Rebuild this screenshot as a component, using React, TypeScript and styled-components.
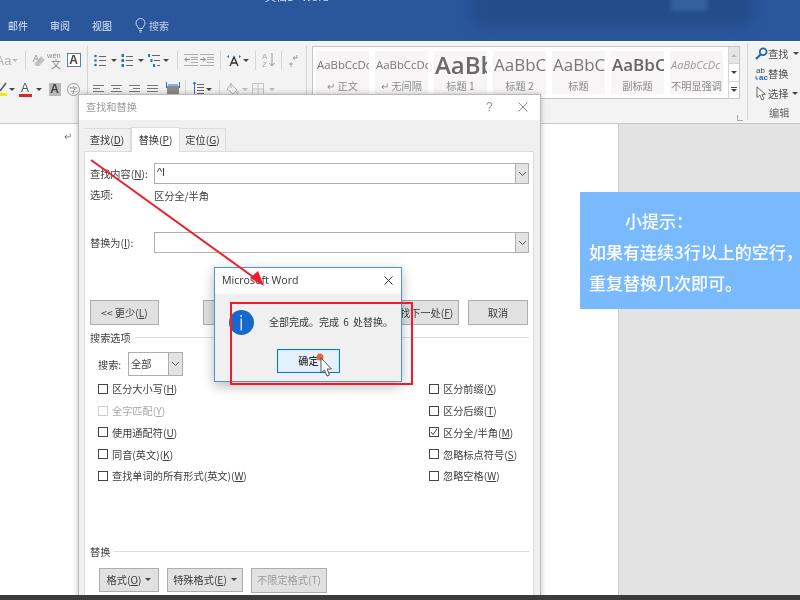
import React from "react";
import styled, { createGlobalStyle } from "styled-components";

const Global = createGlobalStyle`
  html, body { margin: 0; padding: 0; width: 800px; height: 600px; overflow: hidden; background: #e3e3e3; }
  * { box-sizing: border-box; }
`;

const Page = styled.div`
  position: relative;
  width: 800px;
  height: 600px;
  overflow: hidden;
  display: flex;
  flex-direction: column;
  font-family: "Noto Sans CJK SC", "Noto Sans", sans-serif;
  font-size: 10.2px;
  color: #3c3c3c;
  background: #e3e3e3;
  filter: blur(0.4px);
`;

/* ---------- title bar ---------- */
const TitleBar = styled.header`
  position: relative;
  height: 41px;
  flex: none;
  display: flex;
  align-items: flex-end;
  gap: 22px;
  padding: 0 0 8px 8px;
  background: #2a569c;
  color: #dbe5f3;
  font-size: 10px;
  line-height: 15px;
  overflow: hidden;
`;
const Smudge = styled.div`
  position: absolute;
  left: 470px;
  top: -10px;
  width: 285px;
  height: 36px;
  border-radius: 16px;
  background: #244c8a;
  filter: blur(7px);
`;
const Smudge2 = styled.div`
  position: absolute;
  left: 671px;
  top: -4px;
  width: 36px;
  height: 15px;
  background: #35609f;
  filter: blur(2px);
`;
const DocName = styled.div`
  position: absolute;
  left: 265px;
  top: -11px;
  font-size: 11px;
  color: #d4deee;
`;
const TabLabel = styled.span`
  display: block;
`;
const SearchTab = styled.span`
  display: flex;
  align-items: center;
  gap: 3px;
  opacity: 0.85;
  margin-left: 1px;
`;

/* ---------- ribbon ---------- */
const Ribbon = styled.section`
  height: 83px;
  flex: none;
  display: flex;
  align-items: flex-start;
  background: #f3f3f3;
  border-top: 1px solid #fafafa;
  border-bottom: 1px solid #c9c9c9;
  overflow: hidden;
  color: #666;
`;
const ToolGroup = styled.div<{ $w: number; $pad?: number }>`
  width: ${(p) => p.$w}px;
  flex: none;
  height: 72px;
  margin-top: 4px;
  padding: 2px 0 0 ${(p) => p.$pad ?? 0}px;
  border-right: 1px solid #d4d4d4;
  display: flex;
  flex-direction: column;
  gap: 5px;
`;
const ToolRow = styled.div`
  display: flex;
  align-items: center;
  height: 24px;
`;
const Tool = styled.span<{ $w: number }>`
  width: ${(p) => p.$w}px;
  height: 24px;
  flex: none;
  display: flex;
  align-items: center;
  justify-content: center;
  font-family: "Liberation Sans", sans-serif;
`;
const ToolLeft = styled(Tool)`
  justify-content: flex-start;
`;
const FadedLetters = styled.span`
  font-size: 13px;
  color: #b4b4b4;
  margin-left: -3px;
`;
const Caret = styled.i<{ $c?: string }>`
  display: block;
  width: 0;
  height: 0;
  border-left: 3px solid transparent;
  border-right: 3px solid transparent;
  border-top: 3px solid ${(p) => p.$c ?? "#444"};
`;
const UpCaret = styled(Caret)`
  transform: rotate(180deg);
`;
const SpacedCaret = styled(Caret)`
  margin-left: 4px;
`;
const Divider = styled.i`
  display: block;
  flex: none;
  width: 1px;
  height: 19px;
  margin: 0 5px;
  background: #d6d6d6;
`;
const Gallery = styled.div`
  flex: none;
  width: 428px;
  height: 53px;
  margin: 4px 0 0 5px;
  padding: 4px 0 4px 3px;
  background: #fff;
  border: 1px solid #c6c6c6;
  display: flex;
`;
const StyleTile = styled.div`
  width: 53px;
  height: 43px;
  flex: none;
  margin-right: 6px;
  background: #f7f5f5;
  overflow: hidden;
  display: flex;
  flex-direction: column;
  align-items: center;
  &:nth-child(7) { margin-right: 5px; }
`;
const Sample = styled.div<{ $size: number; $bold?: boolean; $italic?: boolean; $c?: string }>`
  height: 28px;
  line-height: 28px;
  white-space: nowrap;
  font-family: "Open Sans", "Noto Sans", sans-serif;
  font-size: ${(p) => p.$size}px;
  font-weight: ${(p) => (p.$bold ? 600 : 400)};
  font-style: ${(p) => (p.$italic ? "italic" : "normal")};
  color: ${(p) => p.$c ?? "#777"};
  width: 100%;
  overflow: hidden;
  padding-left: 1px;
`;
const SampleName = styled.div`
  font-size: 10.2px;
  line-height: 13px;
  color: #8a8a8a;
  white-space: nowrap;
`;
const Scroller = styled.div`
  flex: none;
  width: 11px;
  margin-top: -4px;
  margin-bottom: -4px;
  display: flex;
  flex-direction: column;
  border-left: 1px solid #d6d6d6;
`;
const ScrollCell = styled.div<{ $on?: boolean }>`
  flex: 1;
  background: ${(p) => (p.$on ? "#e6e6e6" : "#fff")};
  display: flex;
  flex-direction: column;
  gap: 1px;
  align-items: center;
  justify-content: center;
  border-bottom: 1px solid #d6d6d6;
  &:last-child { border-bottom: 0; }
`;
const ScrollBar = styled.i`
  display: block;
  width: 6px;
  height: 1px;
  background: #444;
`;
const Launcher = styled.span`
  flex: none;
  width: 6px;
  height: 6px;
  margin: 73px 0 0 -3px;
  border-left: 1px solid #aaa;
  border-bottom: 1px solid #aaa;
`;
const EditGroup = styled.div`
  flex: none;
  height: 77px;
  margin: 1px 0 0 4px;
  padding: 0 0 0 7px;
  border-left: 1px solid #d4d4d4;
  display: flex;
  flex-direction: column;
  color: #4c4c4c;
  font-size: 10.2px;
`;
const EditRow = styled.div`
  height: 20px;
  flex: none;
  display: flex;
  align-items: center;
  white-space: nowrap;
`;
const EditCaret = styled(Caret)`
  margin-left: 5px;
`;
const GroupName = styled.div`
  flex: none;
  margin: 0 0 0 14px;
  line-height: 20px;
  color: #666;
`;

/* ---------- workspace ---------- */
const Workspace = styled.main`
  flex: 1;
  display: flex;
  min-height: 0;
`;
const Sheet = styled.div`
  width: 619px;
  flex: none;
  background: #fff;
  border-right: 1px solid #d0d0d0;
  padding: 5px 0 0 64px;
  font-size: 10px;
  line-height: 14px;
  color: #777;
`;

/* ---------- find & replace dialog ---------- */
const FindDialog = styled.div`
  position: absolute;
  left: 78px;
  top: 94px;
  width: 463px;
  height: 520px;
  background: #f0f0f0;
  border: 1px solid #b9b9b9;
  box-shadow: 0 0 6px rgba(0, 0, 0, 0.25);
  display: flex;
  flex-direction: column;
`;
const DialogTitle = styled.div`
  height: 25px;
  flex: none;
  background: #fff;
  display: flex;
  align-items: center;
  padding: 0 12px 2px 7px;
  color: #9a9a9a;
  font-size: 10.2px;
`;
const TitleSpacer = styled.div`
  flex: 1;
`;
const Help = styled.span`
  width: 32px;
  color: #999;
  font-family: "Liberation Sans", sans-serif;
  font-size: 12px;
`;
const Tabs = styled.div`
  display: flex;
  align-items: flex-end;
  height: 31px;
  flex: none;
  padding-left: 5px;
  position: relative;
  z-index: 1;
`;
const TabItem = styled.div<{ $active?: boolean; $w: number }>`
  width: ${(p) => p.$w}px;
  height: ${(p) => (p.$active ? 25 : 23)}px;
  margin-bottom: ${(p) => (p.$active ? -1 : 0)}px;
  padding-bottom: 2px;
  background: ${(p) => (p.$active ? "#fff" : "#f0f0f0")};
  border: 1px solid #dcdcdc;
  border-bottom: 0;
  border-left: ${(p) => (p.$active ? "1px solid #dcdcdc" : "0")};
  display: flex;
  align-items: center;
  justify-content: center;
  color: #333;
`;
const Pane = styled.div`
  flex: 1;
  margin: 0 6px 0 5px;
  padding: 0 4px 0 5px;
  background: #fff;
  border: 1px solid #dcdcdc;
  display: flex;
  flex-direction: column;
`;
const FieldRow = styled.div<{ $top: number }>`
  display: flex;
  align-items: center;
  height: 21px;
  margin-top: ${(p) => p.$top}px;
`;
const FieldLabel = styled.label`
  width: 64px;
  flex: none;
  white-space: nowrap;
  margin-top: -1px;
`;
const Combo = styled.div`
  flex: 1;
  height: 21px;
  display: flex;
  border: 1px solid #adadad;
  background: #fff;
`;
const ComboValue = styled.div`
  flex: 1;
  padding-left: 2px;
  line-height: 17px;
  font-family: "Liberation Sans", sans-serif;
  font-size: 11px;
  color: #333;
`;
const ComboArrow = styled.div`
  width: 13px;
  flex: none;
  background: #e3e3e3;
  border-left: 1px solid #adadad;
  display: flex;
  align-items: center;
  justify-content: center;
`;
const OptionsRow = styled.div`
  display: flex;
  align-items: center;
  height: 14px;
  margin-top: 4px;
`;
const ButtonRow = styled.div<{ $top: number; $left?: number; $gap?: number }>`
  display: flex;
  align-items: center;
  margin-top: ${(p) => p.$top}px;
  margin-left: ${(p) => p.$left ?? 0}px;
  gap: ${(p) => p.$gap ?? 0}px;
`;
const Btn = styled.div<{ $w: number; $h?: number; $ml?: number; $off?: boolean }>`
  width: ${(p) => p.$w}px;
  height: ${(p) => p.$h ?? 25}px;
  margin-left: ${(p) => p.$ml ?? 0}px;
  flex: none;
  padding-bottom: 1px;
  background: #e1e1e1;
  border: 1px solid #adadad;
  color: ${(p) => (p.$off ? "#9b9b9b" : "#3c3c3c")};
  display: flex;
  align-items: center;
  justify-content: center;
  white-space: nowrap;
`;
const Section = styled.div<{ $top: number }>`
  display: flex;
  align-items: center;
  gap: 4px;
  height: 14px;
  margin-top: ${(p) => p.$top}px;
  white-space: nowrap;
`;
const SectionLine = styled.i`
  flex: 1;
  display: block;
  height: 1px;
  background: #dedede;
`;
const SearchRow = styled.div`
  display: flex;
  align-items: center;
  height: 24px;
  margin: 8px 0 0 8px;
`;
const SearchLabel = styled.span`
  width: 30px;
  flex: none;
`;
const SearchSelect = styled.div`
  width: 55px;
  height: 24px;
  display: flex;
  border: 1px solid #adadad;
`;
const SearchValue = styled.div`
  flex: 1;
  line-height: 21px;
  padding-left: 2px;
`;
const SearchArrow = styled(ComboArrow)`
  width: 14px;
`;
const CheckGrid = styled.div`
  display: grid;
  grid-template-columns: 331px 1fr;
  grid-auto-rows: 21.75px;
  margin: 2px 0 0 8px;
`;
const CheckItem = styled.div<{ $off?: boolean }>`
  display: flex;
  align-items: center;
  gap: 4px;
  white-space: nowrap;
  color: ${(p) => (p.$off ? "#a8a8a8" : "#3c3c3c")};
`;
const Box = styled.span<{ $off?: boolean }>`
  width: 10px;
  height: 10px;
  flex: none;
  border: 1px solid ${(p) => (p.$off ? "#cfcfcf" : "#444")};
  display: flex;
  align-items: center;
  justify-content: center;
  background: #fff;
`;
const Key = styled.span`
  text-decoration: underline;
`;

/* ---------- message box ---------- */
const MessageBox = styled.div`
  position: absolute;
  left: 214px;
  top: 267px;
  width: 188px;
  height: 115px;
  background: #f0f0f0;
  border: 1px solid #4b93d2;
  box-shadow: 0 4px 12px rgba(0, 0, 0, 0.28);
  display: flex;
  flex-direction: column;
`;
const MsgTitle = styled.div`
  height: 26px;
  flex: none;
  background: #fff;
  display: flex;
  align-items: center;
  justify-content: space-between;
  padding: 0 8px 2px 7px;
  font-family: "Open Sans", sans-serif;
  font-size: 10.6px;
  color: #333;
`;
const MsgBody = styled.div`
  display: flex;
  align-items: center;
  height: 28px;
  margin: 14px 0 0 14px;
  gap: 15px;
  color: #333;
`;
const MsgText = styled.span`
  white-space: nowrap;
  margin-top: -2px;
  font-size: 10px;
  word-spacing: 2px;
`;
const OkButton = styled.div`
  width: 63px;
  height: 24px;
  margin: 13px 0 0 62px;
  padding-bottom: 1px;
  background: #e5f1fb;
  border: 1px solid #0078d7;
  box-shadow: inset 0 0 0 1px #d5e8f8;
  display: flex;
  align-items: center;
  justify-content: center;
  font-weight: 500;
  color: #333;
`;

/* ---------- overlays ---------- */
const RedFrame = styled.div`
  position: absolute;
  left: 230px;
  top: 302px;
  width: 183px;
  height: 83px;
  border: 2.5px solid #ee1c2c;
`;
const Overlay = styled.svg`
  position: absolute;
  left: 0;
  top: 0;
`;
const Tip = styled.aside`
  position: absolute;
  left: 580px;
  top: 192px;
  width: 220px;
  height: 117px;
  padding: 13px 0 0 9px;
  background: #79baff;
  color: #fff;
  font-size: 17px;
  font-weight: 500;
  line-height: 31px;
  white-space: nowrap;
`;
const TipHead = styled.div`
  padding-left: 36px;
`;
const BottomBar = styled.div`
  position: absolute;
  left: 0;
  right: 0;
  bottom: 0;
  height: 5px;
  background: #3b3b3b;
`;

/* ---------- drawings ---------- */
const S = ({ w, h, children }: { w: number; h: number; children: React.ReactNode }) => (
  <svg width={w} height={h} viewBox={`0 0 ${w} ${h}`} fill="none">
    {children}
  </svg>
);
const Lines = ({ x, ys, w, c = "#666" }: { x: number; ys: number[]; w: number; c?: string }) => (
  <>
    {ys.map((y) => (
      <rect key={y} x={x} y={y} width={w} height={1} fill={c} />
    ))}
  </>
);
const Bullets = () => (
  <S w={12} h={13}>
    <circle cx={1.5} cy={2} r={1.3} fill="#2b6fbd" />
    <circle cx={1.5} cy={6.5} r={1.3} fill="#2b6fbd" />
    <circle cx={1.5} cy={11} r={1.3} fill="#2b6fbd" />
    <Lines x={5} ys={[2, 6, 11]} w={7} />
  </S>
);
const Numbers = () => (
  <S w={12} h={13}>
    <rect x={0.5} y={0} width={2.5} height={3} fill="#2b6fbd" />
    <rect x={0.5} y={5} width={2.5} height={3} fill="#2b6fbd" />
    <rect x={0.5} y={10} width={2.5} height={3} fill="#2b6fbd" />
    <Lines x={5} ys={[2, 6, 11]} w={7} />
  </S>
);
const Multi = () => (
  <S w={12} h={13}>
    <rect x={0} y={0} width={2} height={3} fill="#2b6fbd" />
    <rect x={2.5} y={5} width={2} height={3} fill="#2b6fbd" />
    <rect x={5} y={10} width={2} height={3} fill="#2b6fbd" />
    <rect x={4} y={1} width={8} height={1} fill="#666" />
    <rect x={6} y={6} width={6} height={1} fill="#666" />
    <rect x={9} y={11} width={3} height={1} fill="#666" />
  </S>
);
const Indent = ({ flip }: { flip?: boolean }) => (
  <S w={14} h={12}>
    <Lines x={0} ys={[0, 11]} w={14} c="#aaa" />
    <Lines x={7} ys={[3, 5, 8]} w={7} c="#aaa" />
    <path d={flip ? "M0 5.5h5M3 3.5l2.5 2-2.5 2" : "M6 5.5H1M3 3.5l-2.5 2 2.5 2"} stroke="#7f8fa6" />
  </S>
);
const Aligned = ({ widths }: { widths: [number, number][] }) => (
  <S w={11} h={11}>
    {widths.map(([x, w], i) => (
      <rect key={i} x={x} y={1 + i * 3} width={w} height={1} fill="#777" />
    ))}
  </S>
);
const Distributed = () => (
  <S w={14} h={14}>
    <rect x={1} y={4} width={12} height={10} fill="#8c8c8c" />
    <path d="M.5 0v6M13.5 0v6M2 3h10" stroke="#2b6fbd" />
  </S>
);
const LineSpacing = () => (
  <S w={12} h={14}>
    <path d="M2.5 0v14M1 2l1.5-2L4 2M1 12l1.5 2L4 12" stroke="#2b6fbd" />
    <Lines x={5} ys={[2, 5, 8, 11]} w={7} />
  </S>
);
const Fill = () => (
  <S w={13} h={14}>
    <path d="M5 2l6 6-4 4-6-5z" stroke="#b0b0b0" />
    <path d="M5 1v5" stroke="#b0b0b0" />
    <circle cx={11.5} cy={10.5} r={1.4} fill="#c8c8c8" />
  </S>
);
const Table = () => (
  <S w={12} h={12}>
    <rect x={0.5} y={0.5} width={11} height={11} stroke="#c4c4c4" />
    <path d="M6 0v12M0 6h12" stroke="#c4c4c4" />
  </S>
);
const Eraser = () => (
  <S w={14} h={14}>
    <path d="M2 11l7-8 4 4-6 6H4z" fill="#c4c4c4" />
    <path d="M1 9l3-7 3 7M2.5 6h3" stroke="#a4a4a4" />
  </S>
);
const Phonetic = () => (
  <svg width="19" height="18" viewBox="0 0 19 18" fill="none">
    <text x="0" y="7" fontSize="7.5" fontFamily="Liberation Sans" fill="#8c8c8c">wén</text>
    <text x="4" y="17" fontSize="10" fontFamily="Noto Sans CJK SC" fill="#7c7c7c">文</text>
  </svg>
);
const BoxedA = styled.span`
  width: 14px;
  height: 14px;
  border: 1px solid #5a7ea8;
  background: #fff;
  color: #444;
  font: 700 12px/12px "Liberation Sans", sans-serif;
  text-align: center;
`;
const ColorA = styled.span`
  width: 13px;
  height: 15px;
  border-bottom: 3px solid #d8262c;
  color: #555;
  font: 400 12px/12px "Liberation Sans", sans-serif;
  text-align: center;
`;
const ShadedA = styled.span`
  width: 12px;
  height: 13px;
  background: #b8b8b8;
  color: #444;
  font: 700 12px/13px "Liberation Sans", sans-serif;
  text-align: center;
`;
const CircleChar = styled.span`
  width: 13px;
  height: 13px;
  border-radius: 50%;
  border: 1px solid #9a9a9a;
  color: #888;
  font: 400 8px/11px "Noto Sans CJK SC", sans-serif;
  text-align: center;
`;
const Highlighter = () => (
  <S w={8} h={15}>
    <path d="M0 9l6-8" stroke="#555" strokeWidth={1.6} />
    <rect x={0} y={11} width={7} height={3} fill="#f5e51b" />
  </S>
);
const TextDir = () => (
  <svg width="14" height="13" viewBox="0 0 14 13" fill="none">
    <path d="M3 12L7 3l4 9M4.5 9h5" stroke="#333" strokeWidth={1.4} />
    <path d="M0 2.5l2-1.5v3zM14 2.5L12 1v3z" fill="#1f6bb8" />
  </svg>
);
const Sort = () => (
  <svg width="14" height="16" viewBox="0 0 14 16" fill="none">
    <text x="0" y="7" fontSize="8" fontFamily="Liberation Sans" fill="#a8a8a8">A</text>
    <text x="0" y="15" fontSize="8" fontFamily="Liberation Sans" fill="#a8a8a8">Z</text>
    <path d="M10 1v13M7.5 11l2.5 3 2.5-3" stroke="#9a9a9a" />
  </svg>
);
const Pilcrow = () => (
  <S w={10} h={13}>
    <path d="M9 1v3H5M7 2.5L5 4l2 1.5" stroke="#999" />
    <path d="M1 10h4M3 8v5" stroke="#aaa" />
  </S>
);
const Magnifier = () => (
  <S w={13} h={13}>
    <circle cx={8.2} cy={4.8} r={3.4} stroke="#1f66b4" strokeWidth={1.8} />
    <path d="M5.5 7.5L1 12" stroke="#1f66b4" strokeWidth={2.2} />
  </S>
);
const ReplaceIcon = () => (
  <svg width="13" height="15" viewBox="0 0 13 15" fill="none">
    <text x="1" y="7" fontSize="8" fontFamily="Liberation Sans" fill="#444">ab</text>
    <text x="4" y="14" fontSize="8" fontWeight="700" fontFamily="Liberation Sans" fill="#1f66b4">ac</text>
    <path d="M1 10v3h2" stroke="#1f66b4" />
  </svg>
);
const SelectIcon = () => (
  <S w={13} h={15}>
    <path d="M2 1v10.5l2.8-2.4L7 14l2-1-2.2-4.6H10.5z" stroke="#666" fill="#fff" />
  </S>
);
const Bulb = () => (
  <S w={11} h={15}>
    <path d="M3.5 10.5C3 8.5 1 7.5 1 5a4.5 4.5 0 0 1 9 0c0 2.5-2 3.5-2.5 5.5z" stroke="#e4ecf6" />
    <path d="M4 12.5h3M4.5 14h2" stroke="#e4ecf6" />
  </S>
);
const Chevron = () => (
  <S w={9} h={6}>
    <path d="M1 1l3.5 3.5L8 1" stroke="#555" />
  </S>
);
const Close = ({ c, s }: { c: string; s: number }) => (
  <S w={s} h={s}>
    <path d={`M.5 .5L${s - 0.5} ${s - 0.5}M${s - 0.5} .5L.5 ${s - 0.5}`} stroke={c} />
  </S>
);
const InfoIcon = () => (
  <S w={25} h={25}>
    <circle cx={12.5} cy={12.5} r={12.5} fill="#1668c9" />
    <rect x={11.5} y={5} width={1.5} height={2} fill="#fff" />
    <rect x={11.5} y={8.5} width={1.5} height={12} fill="#cfe3f7" />
  </S>
);
const Tick = () => (
  <S w={8} h={8}>
    <path d="M1 4l2 2.5L7 1" stroke="#444" />
  </S>
);

const styles: { s: string; n: string; size: number; bold?: boolean; italic?: boolean; c?: string }[] = [
  { s: "AaBbCcDc", n: "↵ 正文", size: 11.4 },
  { s: "AaBbCcDc", n: "↵ 无间隔", size: 11.4 },
  { s: "AaBbCc", n: "标题 1", size: 24, bold: true, c: "#6a6a6a" },
  { s: "AaBbCc", n: "标题 2", size: 17 },
  { s: "AaBbCc", n: "标题", size: 17 },
  { s: "AaBbCc", n: "副标题", size: 17, bold: true, c: "#666" },
  { s: "AaBbCcDc", n: "不明显强调", size: 11, italic: true, c: "#999" },
];

const leftChecks: [string, string, boolean?][] = [
  ["区分大小写", "H"],
  ["全字匹配", "Y", true],
  ["使用通配符", "U"],
  ["同音(英文)", "K"],
  ["查找单词的所有形式(英文)", "W"],
];
const rightChecks: [string, string, boolean?][] = [
  ["区分前缀", "X"],
  ["区分后缀", "T"],
  ["区分全/半角", "M", true],
  ["忽略标点符号", "S"],
  ["忽略空格", "W"],
];

const Check = ({ text, k, off, on }: { text: string; k: string; off?: boolean; on?: boolean }) => (
  <CheckItem $off={off}>
    <Box $off={off}>{on && <Tick />}</Box>
    <span>
      {text}(<Key>{k}</Key>)
    </span>
  </CheckItem>
);

export default function App() {
  return (
    <>
      <Global />
      <Page>
        <TitleBar>
          <Smudge />
          <Smudge2 />
          <DocName>文档1 - Word</DocName>
          <TabLabel>邮件</TabLabel>
          <TabLabel>审阅</TabLabel>
          <TabLabel>视图</TabLabel>
          <SearchTab>
            <Bulb />
            搜索
          </SearchTab>
        </TitleBar>

        <Ribbon>
          <ToolGroup $w={88}>
            <ToolRow>
              <Tool $w={10}><FadedLetters>Aa</FadedLetters></Tool>
              <Tool $w={10}><Caret $c="#bbb" /></Tool>
              <Divider />
              <Tool $w={15}><Eraser /></Tool>
              <Tool $w={20}><Phonetic /></Tool>
              <Tool $w={15}><BoxedA>A</BoxedA></Tool>
            </ToolRow>
            <ToolRow>
              <Tool $w={8}><Highlighter /></Tool>
              <Tool $w={8}><Caret /></Tool>
              <Tool $w={18}><ColorA>A</ColorA></Tool>
              <Tool $w={10}><Caret /></Tool>
              <Tool $w={21}><ShadedA>A</ShadedA></Tool>
              <Tool $w={17}><CircleChar>字</CircleChar></Tool>
            </ToolRow>
          </ToolGroup>
          <ToolGroup $w={219} $pad={5}>
            <ToolRow>
              <Tool $w={13}><Bullets /></Tool>
              <Tool $w={15}><Caret /></Tool>
              <Tool $w={12}><Numbers /></Tool>
              <Tool $w={15}><Caret /></Tool>
              <Tool $w={12}><Multi /></Tool>
              <Tool $w={12}><Caret /></Tool>
              <Divider />
              <Tool $w={15}><Indent /></Tool>
              <Tool $w={17}><Indent flip /></Tool>
              <Divider />
              <Tool $w={15}><TextDir /></Tool>
              <Tool $w={9}><Caret /></Tool>
              <Divider />
              <Tool $w={15}><Sort /></Tool>
              <Divider />
              <Tool $w={12}><Pilcrow /></Tool>
            </ToolRow>
            <ToolRow>
              <ToolLeft $w={18}><Aligned widths={[[0, 11], [0, 7], [0, 11], [0, 7]]} /></ToolLeft>
              <ToolLeft $w={18}><Aligned widths={[[0, 11], [2, 7], [0, 11], [2, 7]]} /></ToolLeft>
              <ToolLeft $w={18}><Aligned widths={[[0, 11], [4, 7], [0, 11], [4, 7]]} /></ToolLeft>
              <ToolLeft $w={18}><Aligned widths={[[0, 11], [0, 11], [0, 11], [0, 11]]} /></ToolLeft>
              <Tool $w={15}><Distributed /></Tool>
              <Divider />
              <Tool $w={13}><LineSpacing /></Tool>
              <Tool $w={10}><Caret /></Tool>
              <Divider />
              <Tool $w={15}><Fill /></Tool>
              <Tool $w={10}><Caret $c="#bbb" /></Tool>
              <Tool $w={16}><Table /></Tool>
              <Tool $w={12}><Caret $c="#bbb" /></Tool>
            </ToolRow>
          </ToolGroup>
          <Gallery>
            {styles.map((t) => (
              <StyleTile key={t.n}>
                <Sample $size={t.size} $bold={t.bold} $italic={t.italic} $c={t.c}>{t.s}</Sample>
                <SampleName>{t.n}</SampleName>
              </StyleTile>
            ))}
            <Scroller>
              <ScrollCell $on><UpCaret $c="#bbb" /></ScrollCell>
              <ScrollCell><Caret /></ScrollCell>
              <ScrollCell><ScrollBar /><Caret /></ScrollCell>
            </Scroller>
          </Gallery>
          <Launcher />
          <EditGroup>
            <EditRow><Magnifier />查找<EditCaret /></EditRow>
            <EditRow><ReplaceIcon />替换</EditRow>
            <EditRow><SelectIcon />选择<SpacedCaret /></EditRow>
            <GroupName>编辑</GroupName>
          </EditGroup>
        </Ribbon>

        <Workspace>
          <Sheet>↵</Sheet>
        </Workspace>

        <FindDialog>
          <DialogTitle>
            查找和替换
            <TitleSpacer />
            <Help>?</Help>
            <Close c="#888" s={10} />
          </DialogTitle>
          <Tabs>
            <TabItem $w={47}><span>查找(<Key>D</Key>)</span></TabItem>
            <TabItem $w={49} $active><span>替换(<Key>P</Key>)</span></TabItem>
            <TabItem $w={46}><span>定位(<Key>G</Key>)</span></TabItem>
          </Tabs>
          <Pane>
            <FieldRow $top={11}>
              <FieldLabel>查找内容(<Key>N</Key>):</FieldLabel>
              <Combo>
                <ComboValue>^l</ComboValue>
                <ComboArrow><Chevron /></ComboArrow>
              </Combo>
            </FieldRow>
            <OptionsRow>
              <FieldLabel>选项:</FieldLabel>
              <span>区分全/半角</span>
            </OptionsRow>
            <FieldRow $top={30}>
              <FieldLabel>替换为(<Key>I</Key>):</FieldLabel>
              <Combo>
                <ComboValue />
                <ComboArrow><Chevron /></ComboArrow>
              </Combo>
            </FieldRow>
            <ButtonRow $top={47}>
              <Btn $w={69}><span>&lt;&lt; 更少(<Key>L</Key>)</span></Btn>
              <Btn $w={85} $ml={44}><span>替换(<Key>R</Key>)</span></Btn>
              <Btn $w={80} $ml={8}><span>全部替换(<Key>A</Key>)</span></Btn>
              <Btn $w={75} $ml={8}><span>查找下一处(<Key>F</Key>)</span></Btn>
              <Btn $w={60} $ml={9}>取消</Btn>
            </ButtonRow>
            <Section $top={5}>搜索选项<SectionLine /></Section>
            <SearchRow>
              <SearchLabel>搜索:</SearchLabel>
              <SearchSelect>
                <SearchValue>全部</SearchValue>
                <SearchArrow><Chevron /></SearchArrow>
              </SearchSelect>
            </SearchRow>
            <CheckGrid>
              {leftChecks.map(([t, k, off], i) => (
                <React.Fragment key={t}>
                  <Check text={t} k={k} off={off} />
                  <Check text={rightChecks[i][0]} k={rightChecks[i][1]} on={rightChecks[i][2]} />
                </React.Fragment>
              ))}
            </CheckGrid>
            <Section $top={58}>替换<SectionLine /></Section>
            <ButtonRow $top={9} $left={9} $gap={8}>
              <Btn $w={60} $h={24}><span>格式(<Key>O</Key>)</span><SpacedCaret /></Btn>
              <Btn $w={76} $h={24}><span>特殊格式(<Key>E</Key>)</span><SpacedCaret /></Btn>
              <Btn $w={76} $h={25} $off>不限定格式(T)</Btn>
            </ButtonRow>
          </Pane>
        </FindDialog>

        <MessageBox>
          <MsgTitle>
            Microsoft Word
            <Close c="#333" s={9} />
          </MsgTitle>
          <MsgBody>
            <InfoIcon />
            <MsgText>全部完成。完成 6 处替换。</MsgText>
          </MsgBody>
          <OkButton>确定</OkButton>
        </MessageBox>

        <RedFrame />
        <Overlay width="800" height="600" viewBox="0 0 800 600" fill="none">
          <path d="M91 160L256 279" stroke="#e8222c" strokeWidth={2} />
          <path d="M264 286L250 278L258 271z" fill="#ee1c2c" />
          <circle cx={320} cy={357} r={3.5} fill="#e8663f" />
          <path
            d="M321 358v15l3.5-3 2.5 6 2.5-1-2.5-6h4.5z"
            fill="#fff"
            stroke="#444"
            strokeWidth={0.9}
          />
        </Overlay>

        <Tip>
          <TipHead>小提示：</TipHead>
          <div>如果有连续3行以上的空行，</div>
          <div>重复替换几次即可。</div>
        </Tip>
        <BottomBar />
      </Page>
    </>
  );
}
